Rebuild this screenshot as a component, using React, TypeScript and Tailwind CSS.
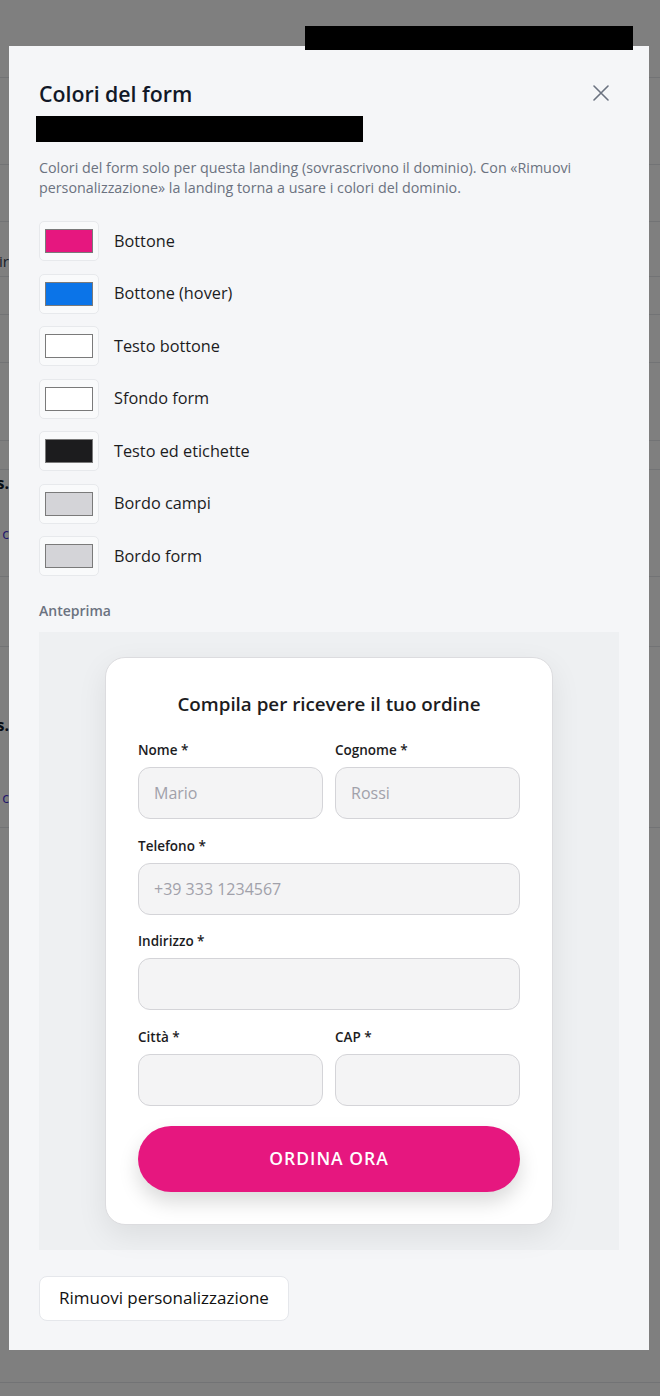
import React from 'react';

const swatches = [
  { label: 'Bottone', fill: 'bg-[#e6177f]' },
  { label: 'Bottone (hover)', fill: 'bg-[#0b74e8]' },
  { label: 'Testo bottone', fill: 'bg-white' },
  { label: 'Sfondo form', fill: 'bg-white' },
  { label: 'Testo ed etichette', fill: 'bg-[#1c1c1e]' },
  { label: 'Bordo campi', fill: 'bg-[#d4d4d8]' },
  { label: 'Bordo form', fill: 'bg-[#d4d4d8]' },
];

function Field({ label, placeholder }: { label: string; placeholder?: string }) {
  return (
    <div className="flex flex-col">
      <label className="mb-2 text-[13.5px] font-semibold leading-[18px] text-[#1c1c1e]">{label}</label>
      <input
        readOnly
        placeholder={placeholder}
        className="h-[52px] w-full rounded-[12px] border border-[#d4d4d8] bg-[#f4f4f5] px-[15px] text-[16px] text-[#1c1c1e] outline-none placeholder:text-[#a1a1aa]"
      />
    </div>
  );
}

// page behind the overlay, only a thin strip of it shows
function BackgroundPage() {
  const tail = (text: string) => (
    <div className="flex w-[9px] justify-end overflow-hidden">
      <span className="whitespace-nowrap">{text}</span>
    </div>
  );
  return (
    <div className="min-h-[1396px] bg-white font-['Open_Sans',sans-serif]">
      <div className="h-[78px] border-b border-gray-200" />
      <div className="h-[87px] border-b border-gray-200" />
      <div className="h-[57px] border-b border-gray-200" />
      <div className="flex h-[93px] flex-col border-b border-gray-200">
        <div className="flex h-[55px] items-end border-b border-gray-200 pb-[4px] text-[15px] text-gray-700">{tail('Magazzir')}</div>
      </div>
      <div className="h-[48px] border-b border-gray-200" />
      <div className="h-[78px] border-b border-gray-200" />
      <div className="flex h-[136px] flex-col border-b border-gray-200">
        <div className="h-[29px] border-b border-gray-200" />
        <div className="pt-[1px] text-[16px] font-bold text-gray-900">{tail('Prodottis.')}</div>
        <div className="mt-[28px] text-[14px] text-indigo-700">{tail('Vedi info c')}</div>
      </div>
      <div className="h-[70px] border-b border-gray-200" />
      <div className="flex h-[181px] flex-col border-b border-gray-200">
        <div className="mt-[66px] text-[16px] font-bold text-gray-900">{tail('Prodottis.')}</div>
        <div className="mt-[50px] text-[14px] text-indigo-700">{tail('Vedi c')}</div>
      </div>
      <div className="h-[555px] border-b border-gray-200" />
    </div>
  );
}

export default function App() {
  return (
    <div className="relative h-[1396px] overflow-hidden font-['Open_Sans',sans-serif]">
      <BackgroundPage />
      <div className="fixed inset-0 overflow-hidden bg-black/50">
        <div className="absolute left-[305px] top-[26px] z-10 h-[24px] w-[328px] bg-black" />

        <div className="ml-[9px] mt-[46px] w-[640px] bg-[#f5f6f8] px-[30px] pb-[29px] pt-[34px]">
          <div className="flex items-start justify-between">
            <h2 className="text-[21.3px] font-semibold leading-[28px] text-[#111827]">Colori del form</h2>
            <button className="mr-[10px] mt-[5px] text-[#6b7280]">
              <svg width="16" height="16" viewBox="0 0 16 16" fill="none" stroke="currentColor" strokeWidth="1.6" strokeLinecap="round">
                <path d="M1 1l14 14M15 1L1 15" />
              </svg>
            </button>
          </div>
          <div className="-ml-[3px] mt-[8px] h-[26px] w-[327px] bg-black" />

          <p className="mt-[16px] text-[14.3px] leading-5 text-[#6b7280]">
            Colori del form solo per questa landing (sovrascrivono il dominio). Con «Rimuovi
            <br />
            personalizzazione» la landing torna a usare i colori del dominio.
          </p>

          <div className="mt-[23px] flex flex-col gap-[12.5px]">
            {swatches.map((s) => (
              <div key={s.label} className="flex h-[40px] items-center gap-[15px]">
                <div className="flex h-[40px] w-[60px] items-center justify-center rounded-[5px] border border-[#e7e9ec] bg-[#f9fafb]">
                  <div className={`h-[24px] w-[48px] border border-[#7a7a7a] ${s.fill}`} />
                </div>
                <span className="text-[16.3px] text-[#1c1c1e]">{s.label}</span>
              </div>
            ))}
          </div>

          <div className="mt-[25px] text-[14px] font-semibold leading-5 text-[#6b7280]">Anteprima</div>

          <div className="mt-[11px] bg-[#eef0f2] p-[25px]">
            <div className="mx-auto w-[448px] rounded-[20px] border border-[#dcdcdf] bg-white px-8 pb-8 pt-8 shadow-[0_10px_30px_rgba(0,0,0,0.08)]">
              <h3 className="text-center text-[18.8px] font-semibold leading-7 text-[#1c1c1e]">Compila per ricevere il tuo ordine</h3>
              <div className="mt-[23px] flex flex-col gap-[17.5px]">
                <div className="grid grid-cols-2 gap-3">
                  <Field label="Nome *" placeholder="Mario" />
                  <Field label="Cognome *" placeholder="Rossi" />
                </div>
                <Field label="Telefono *" placeholder="+39 333 1234567" />
                <Field label="Indirizzo *" />
                <div className="grid grid-cols-2 gap-3">
                  <Field label="Città *" />
                  <Field label="CAP *" />
                </div>
              </div>
              <button className="mt-5 h-[66px] w-full rounded-full bg-[#e6177f] text-[17.5px] font-semibold tracking-[1px] text-white shadow-[0_10px_20px_rgba(0,0,0,0.15)]">
                ORDINA ORA
              </button>
            </div>
          </div>

          <button className="mt-[26px] h-[45px] rounded-lg border border-[#e5e7eb] bg-white px-[19px] text-[17px] font-medium text-[#111]">
            Rimuovi personalizzazione
          </button>
        </div>
      </div>
    </div>
  );
}
